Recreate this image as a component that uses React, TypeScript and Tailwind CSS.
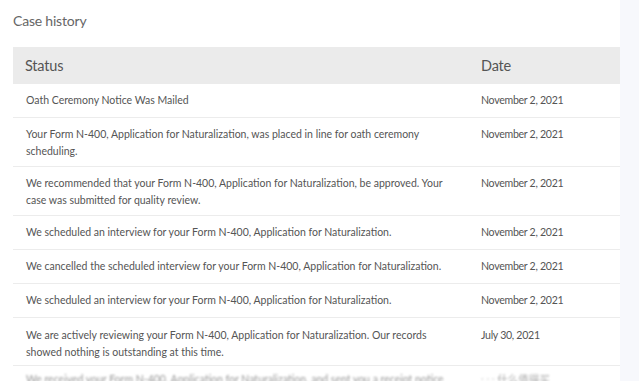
import React from "react";

const rows: { text: string[]; date: string }[] = [
  { text: ["Oath Ceremony Notice Was Mailed"], date: "November 2, 2021" },
  {
    text: [
      "Your Form N-400, Application for Naturalization, was placed in line for oath ceremony",
      "scheduling.",
    ],
    date: "November 2, 2021",
  },
  {
    text: [
      "We recommended that your Form N-400, Application for Naturalization, be approved. Your",
      "case was submitted for quality review.",
    ],
    date: "November 2, 2021",
  },
  { text: ["We scheduled an interview for your Form N-400, Application for Naturalization."], date: "November 2, 2021" },
  { text: ["We cancelled the scheduled interview for your Form N-400, Application for Naturalization."], date: "November 2, 2021" },
  { text: ["We scheduled an interview for your Form N-400, Application for Naturalization."], date: "November 2, 2021" },
  {
    text: [
      "We are actively reviewing your Form N-400, Application for Naturalization. Our records",
      "showed nothing is outstanding at this time.",
    ],
    date: "July 30, 2021",
  },
];

export default function App() {
  return (
    <div
      className="flex h-[381px] w-[639px] overflow-hidden bg-white text-[#555]"
      style={{ fontFamily: "Lato, 'Liberation Sans', sans-serif" }}
    >
      <div className="flex w-[620px] shrink-0 flex-col pl-[13px]">
        <div className="h-[47px] shrink-0 pt-[12px] text-[14px] leading-[18px] tracking-[-0.2px] text-[#666]">
          Case history
        </div>
        <div className="flex h-[37px] shrink-0 items-center bg-[#ebebeb] text-[14.5px] tracking-[-0.2px] text-[#555]">
          <div className="w-[468px] pl-[12px]">Status</div>
          <div>Date</div>
        </div>
        {rows.map((r, i) => (
          <div
            key={i}
            className={`flex shrink-0 border-b border-[#ececec] text-[10.5px] leading-[17px] ${
              r.text.length > 1 ? (i === 6 ? "h-[48px] pt-[9px]" : "h-[49px] pt-[8px]") : "h-[34px] items-center"
            }`}
          >
            <div className="w-[468px] pl-[13px]">
              {r.text.map((t, j) => (
                <div key={j}>{t}</div>
              ))}
            </div>
            <div className="text-[10.6px] tracking-[-0.3px]">{r.date}</div>
          </div>
        ))}
        <div className="flex shrink-0 pt-[5px] text-[10.5px] leading-[16px] text-[#999] blur-[1.2px]">
          <div className="w-[468px] pl-[13px]">
            We received your Form N-400, Application for Naturalization, and sent you a receipt notice
          </div>
          <div className="text-[#aaa]">
            <span className="opacity-50">· · ·</span>{" "}
            <span style={{ fontFamily: "'Noto Sans CJK SC', sans-serif" }}>什么值得买</span>
          </div>
        </div>
      </div>
      <div className="flex-1 bg-[#f7f8fc]" />
    </div>
  );
}
